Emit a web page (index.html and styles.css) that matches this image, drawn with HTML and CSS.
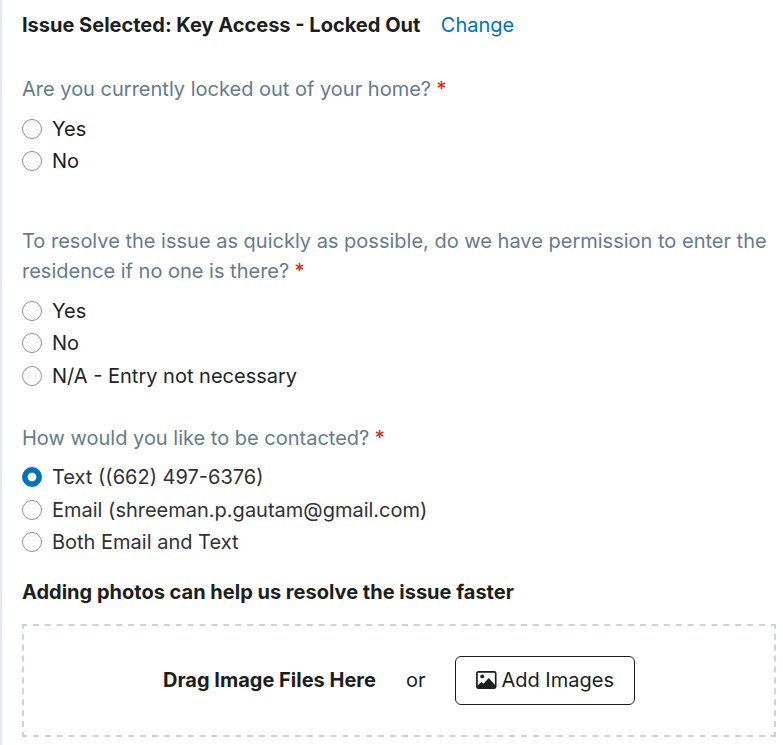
FILE: index.html
```html
<!DOCTYPE html>
<html lang="en">
<head>
<meta charset="utf-8">
<title>Service Request</title>
<link rel="stylesheet" href="styles.css">
</head>
<body>
<main class="panel">
  <header class="issue"><h1>Issue Selected: Key Access - Locked Out</h1><a href="#">Change</a></header>
  <fieldset class="question locked">
    <legend>Are you currently locked out of your home? <b>*</b></legend>
    <label><input type="radio" name="locked"><span>Yes</span></label>
    <label><input type="radio" name="locked"><span>No</span></label>
  </fieldset>
  <fieldset class="question permission">
    <legend>To resolve the issue as quickly as possible, do we have permission to enter the residence if no one is there? <b>*</b></legend>
    <label><input type="radio" name="permission"><span>Yes</span></label>
    <label><input type="radio" name="permission"><span>No</span></label>
    <label><input type="radio" name="permission"><span>N/A - Entry not necessary</span></label>
  </fieldset>
  <fieldset class="question contact">
    <legend>How would you like to be contacted? <b>*</b></legend>
    <label><input type="radio" name="contact" checked><span>Text ((662) 497-6376)</span></label>
    <label><input type="radio" name="contact"><span>Email (shreeman.p.gautam@gmail.com)</span></label>
    <label><input type="radio" name="contact"><span>Both Email and Text</span></label>
  </fieldset>
  <h2>Adding photos can help us resolve the issue faster</h2>
  <section class="dropzone">
    <svg class="outline" aria-hidden="true"><path class="across" d="M0 1H754M0 112H754"/><path class="down" d="M1 0V113M753 0V113"/></svg>
    <strong>Drag Image Files Here</strong>
    <span class="or">or</span>
    <button type="button"><svg class="image-icon" viewBox="0 0 21 18" aria-hidden="true"><rect x=".9" y=".9" width="18.8" height="16.2" rx="1.5" fill="none" stroke="currentColor" stroke-width="1.7"/><circle cx="6.2" cy="5.4" r="1.9"/><path d="M1.5 14.5L5.5 11L7.5 12.8L12.7 7L19 14V17H1.5z"/></svg>Add Images</button>
  </section>
</main>
</body>
</html>
```

FILE: styles.css
```css
* { box-sizing: border-box; }
body { margin: 0; background: #fff; color: #1b1d20; font: 20px/30px Inter, sans-serif; }
.panel { width: 783px; height: 745px; padding: 10px 7px 0 20px; border-left: 2px solid #e3e8ed; overflow: hidden; }
h1, h2 { margin: 0; font-size: 20px; line-height: 30px; font-weight: 700; }
.issue { display: flex; gap: 20.5px; height: 64px; }
.issue a { color: #0072bc; text-decoration: none; }
.question { margin: 0; padding: 0; border: 0; min-width: 0; }
legend { padding: 0; margin-bottom: 9px; color: #657c8c; }
legend b { margin-left: -.5px; color: #d92b14; font-weight: 500; }
label { display: flex; align-items: center; height: 32px; }
label + label + label { height: 33px; }
input { appearance: none; flex: none; width: 20px; height: 20px; margin: 0 10px 0 0; border: 1px solid #8b909b; border-radius: 50%; background: #fff; }
input:checked { border-color: #0072bc; background: radial-gradient(circle, #fff 3.9px, #0072bc 4.8px); }
.locked { height: 152px; }
.permission { height: 197px; color: #222428; }
.contact { height: 154px; color: #303236; }
.contact legend { margin-bottom: 8px; }
.contact label { height: 32px; }
.contact label + label { height: 33px; }
.contact label + label + label { height: 32px; }
h2 { height: 47px; }
.dropzone { position: relative; display: flex; align-items: center; height: 113px; padding-left: 141px; }
.outline { position: absolute; inset: 0; width: 754px; height: 113px; fill: none; stroke: #cdd3d8; stroke-width: 2; }
.across { stroke-dasharray: 6 5.905; stroke-dashoffset: 1; }
.down { stroke-dasharray: 6 4.92; stroke-dashoffset: 1.2; }
.dropzone strong { font-weight: 700; margin-top: -1px; }
.or { margin: -1px 30px 0; }
button { display: flex; align-items: center; justify-content: flex-start; gap: 4px; width: 180px; height: 49px; padding: 0 0 2px 20px; border: 1px solid #1b1d20; border-radius: 6px; background: #fff; color: #1b1d20; font: inherit; }
.image-icon { width: 21px; height: 18px; fill: currentColor; }
```
